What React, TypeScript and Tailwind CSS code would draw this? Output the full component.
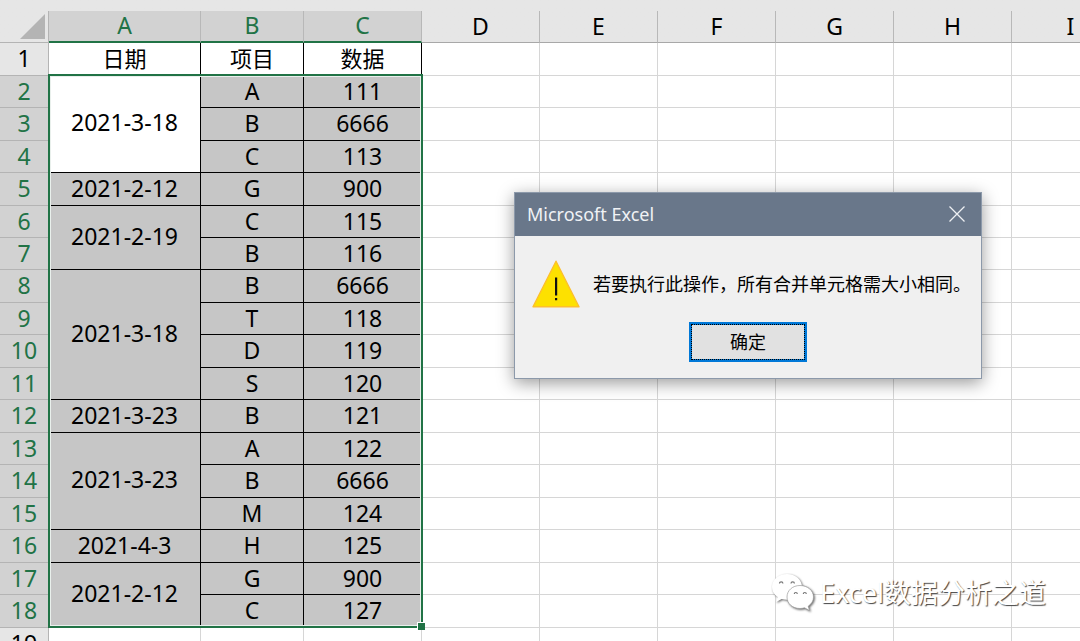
import React from 'react';

interface SheetRow {
  item: string;
  value: number;
  date?: string;
  span?: number; // how many rows the merged date cell covers
}

const COLUMNS = ['A', 'B', 'C', 'D', 'E', 'F', 'G', 'H', 'I'];
const EMPTY_COLUMNS = ['D', 'E', 'F', 'G', 'H', 'I'];

const ROWS: SheetRow[] = [
  { date: '2021-3-18', span: 3, item: 'A', value: 111 },
  { item: 'B', value: 6666 },
  { item: 'C', value: 113 },
  { date: '2021-2-12', span: 1, item: 'G', value: 900 },
  { date: '2021-2-19', span: 2, item: 'C', value: 115 },
  { item: 'B', value: 116 },
  { date: '2021-3-18', span: 4, item: 'B', value: 6666 },
  { item: 'T', value: 118 },
  { item: 'D', value: 119 },
  { item: 'S', value: 120 },
  { date: '2021-3-23', span: 1, item: 'B', value: 121 },
  { date: '2021-3-23', span: 3, item: 'A', value: 122 },
  { item: 'B', value: 6666 },
  { item: 'M', value: 124 },
  { date: '2021-4-3', span: 1, item: 'H', value: 125 },
  { date: '2021-2-12', span: 2, item: 'G', value: 900 },
  { item: 'C', value: 127 },
];

const TALL_ROWS = [1, 3, 5, 8, 10, 12, 14, 16, 18];
const rowHeight = (n: number) => (TALL_ROWS.includes(n) ? 'h-[33px]' : 'h-8');

const EmptyCells: React.FC = () => (
  <>
    {EMPTY_COLUMNS.map((col) => (
      <td key={col} className="border-r border-b border-[#d6d6d6]"></td>
    ))}
  </>
);

const RowHeader: React.FC<{ n: number; selected?: boolean }> = ({ n, selected }) => (
  <th
    scope="row"
    className={`border-r border-b border-[#b4b4b4] pb-0.5 font-normal ${selected ? 'bg-[#d2d2d2] text-[#217346]' : 'bg-[#e6e6e6] text-black'}`}
  >
    {n}
  </th>
);

const Sheet: React.FC = () => (
  <div className="relative w-[1130px]">
    <table className="w-full table-fixed border-separate border-spacing-0 text-center text-[23px] leading-6 text-black">
      <colgroup>
        <col className="w-[49px]" />
        <col className="w-[152px]" />
        <col className="w-[103px]" />
        {COLUMNS.slice(2).map((col) => (
          <col key={col} className="w-[118px]" />
        ))}
      </colgroup>
      <thead>
        <tr className="h-8">
          <td className="border-r border-b border-[#b4b4b4]">
            <button aria-label="全选" className="flex w-full justify-end pr-[3px]">
              <svg width="25" height="25" viewBox="0 0 25 25">
                <path d="M25 0V25H0Z" fill="#b4b4b4" />
              </svg>
            </button>
          </td>
          {COLUMNS.map((col, i) => (
            <th
              key={col}
              scope="col"
              className={`border-r pb-0.5 font-normal ${i < 3 ? 'border-b-2 border-r-[#b8b8b8] border-b-[#217346] bg-[#d2d2d2] text-[#217346]' : 'border-b border-r-[#b8b8b8] border-b-[#a8a8a8]'}`}
            >
              {col}
            </th>
          ))}
        </tr>
      </thead>
      <tbody>
        <tr className={rowHeight(1)}>
          <RowHeader n={1} />
          {['日期', '项目', '数据'].map((title) => (
            <td key={title} className="border-r border-b border-black pb-0.5 text-[22px]">{title}</td>
          ))}
          <EmptyCells />
        </tr>
        {ROWS.map((row, i) => (
          <tr key={i} className={rowHeight(i + 2)}>
            <RowHeader n={i + 2} selected />
            {row.date && (
              <td
                rowSpan={row.span}
                className={`border-r border-b border-black ${row.span === 1 ? 'pb-0.5' : 'pb-1'} ${i === 0 ? 'bg-white' : 'bg-[#c6c6c6]'}`}
              >
                {row.date}
              </td>
            )}
            <td className="border-r border-b border-black bg-[#c6c6c6] pb-0.5">{row.item}</td>
            <td className="border-r border-b border-black bg-[#c6c6c6] pb-0.5">{row.value}</td>
            <EmptyCells />
          </tr>
        ))}
        <tr className="h-8">
          <RowHeader n={19} />
          {['A', 'B', 'C'].map((col) => (
            <td key={col} className="border-r border-b border-[#d6d6d6]"></td>
          ))}
          <EmptyCells />
        </tr>
      </tbody>
    </table>

    {/* selection frame and fill handle */}
    <div className="pointer-events-none absolute top-[63px] left-12 h-[554px] w-[375px] border-2 border-[#217346]">
      <div className="h-full w-full border border-[#e9f0ec]"></div>
      <div className="absolute -right-1 -bottom-1 h-2 w-2 border-t border-l border-white bg-[#217346]"></div>
    </div>
  </div>
);

const AlertDialog: React.FC = () => (
  <div
    role="alertdialog"
    aria-labelledby="alert-title"
    aria-describedby="alert-text"
    className="absolute top-48 left-[514px] w-[468px] border border-[#8c99aa] bg-[#f0f0f0] shadow-[0_4px_16px_rgba(0,0,0,0.4)]"
  >
    <div className="flex h-[43px] items-center justify-between bg-[#69778a] pr-4 pb-0.5 pl-3 text-white">
      <h1 id="alert-title" className="text-[18px] leading-6 text-[#f0f2f5]">Microsoft Excel</h1>
      <button aria-label="关闭">
        <svg width="16" height="16" viewBox="0 0 16 16" stroke="#eef0f3" strokeWidth="1.3">
          <path d="M0.5 0.5L15.5 15.5M15.5 0.5L0.5 15.5" />
        </svg>
      </button>
    </div>
    <div className="flex items-center gap-3 px-4 pt-6">
      <svg width="50" height="48" viewBox="0 0 50 48" className="shrink-0">
        <path d="M25 1.2L48 46.8H2Z" fill="#fde100" stroke="#fdbf2d" strokeWidth="1.4" strokeLinejoin="round" />
        <path d="M24 17.5H26.2V35.5H24ZM24 38H26.2V40.2H24Z" fill="#111" />
      </svg>
      <p id="alert-text" className="text-[18px] leading-6 whitespace-nowrap text-black">若要执行此操作，所有合并单元格需大小相同。</p>
    </div>
    <div className="flex justify-center pt-3.5 pb-4">
      <button className="h-10 w-[118px] border-[3px] border-[#0078d7] bg-[#e1e1e1] text-[18px] text-black outline-1 -outline-offset-3 outline-black outline-dotted">
        确定
      </button>
    </div>
  </div>
);

const Watermark: React.FC = () => (
  <div className="pointer-events-none absolute right-[34px] bottom-7 flex items-center gap-1">
    <svg width="45" height="40" viewBox="0 0 45 40" className="drop-shadow-[1px_1px_1px_rgba(0,0,0,0.6)]">
      <path
        d="M16 1C7.500 1 1 6.800 1 14c0 4.200 2.200 7.700 5.600 10.100L5 29l5.700-2.900c1.800.5 3.500.7 5.300.7C24 26.800 31 21.200 31 14S24.500 1 16 1Z"
        fill="#fff"
      />
      <path
        d="M29 12.500c-7.500 0-13 5-13 11.500s5.500 11.500 13 11.500c1.600 0 3.100-.3 4.500-.7L38.500 37.500l-1.300-4.300C40.500 31 42.500 27.800 42.500 24c0-6.500-6-11.500-13.500-11.500Z"
        fill="#fff"
        stroke="#999"
        strokeWidth="0.7"
      />
      <g fill="none" stroke="#777" strokeWidth="1.2">
        <path d="M8.500 10.500a1.700 1.700 0 0 1 3.400 0M20 10.500a1.700 1.700 0 0 1 3.400 0M23.300 21a1.500 1.500 0 0 1 3 0M32.300 21a1.500 1.500 0 0 1 3 0" />
      </g>
    </svg>
    <span className="text-[27px] leading-9 text-white [text-shadow:1px_1px_1px_#444]">Excel数据分析之道</span>
  </div>
);

export default function App() {
  return (
    <main className="relative h-screen w-full overflow-hidden bg-white font-['Noto_Sans','Noto_Sans_CJK_SC',sans-serif]">
      <div className="bg-linear-to-b from-[#e6e6e6] from-[43px] to-white to-[43px] pt-[11px]">
        <Sheet />
      </div>
      <AlertDialog />
      <Watermark />
    </main>
  );
}
